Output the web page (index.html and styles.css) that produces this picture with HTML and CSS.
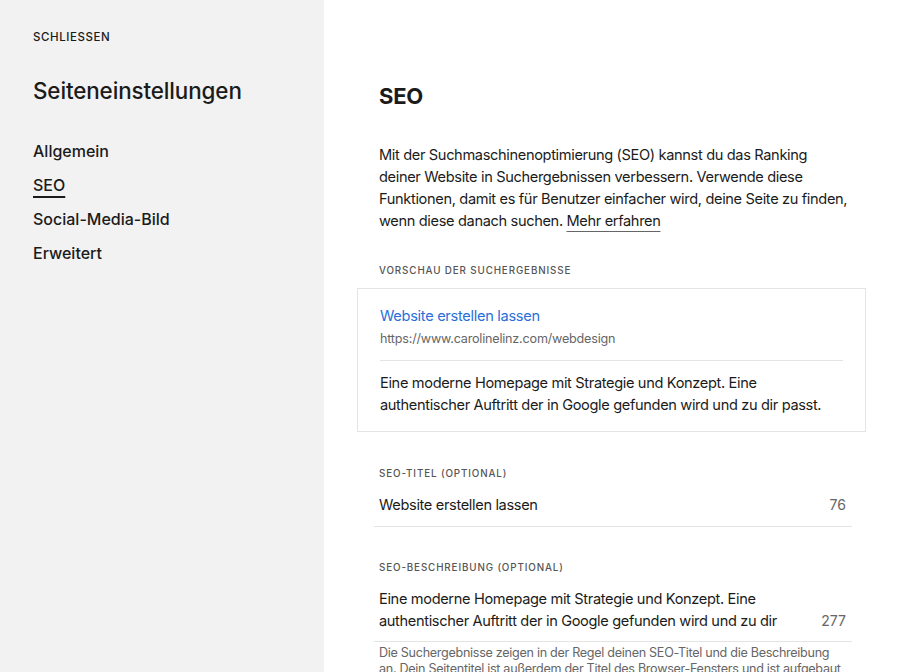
FILE: index.html
```html
<!DOCTYPE html>
<html lang="de">
<head>
<meta charset="utf-8">
<title>Seiteneinstellungen – SEO</title>
<link rel="stylesheet" href="styles.css">
</head>
<body>
<div class="app">
  <aside class="sidebar">
    <div class="close">SCHLIESSEN</div>
    <h2 class="side-title">Seiteneinstellungen</h2>
    <nav class="nav">
      <div class="nav-item">Allgemein</div>
      <div class="nav-item active">SEO</div>
      <div class="nav-item">Social-Media-Bild</div>
      <div class="nav-item">Erweitert</div>
    </nav>
  </aside>
  <main class="main">
    <div class="content">
      <h1 class="title">SEO</h1>
      <p class="intro">Mit der Suchmaschinenoptimierung (SEO) kannst du das Ranking deiner Website in Suchergebnissen verbessern. Verwende diese Funktionen, damit es für Benutzer einfacher wird, deine Seite zu finden, wenn diese danach suchen. <a class="more">Mehr erfahren</a></p>

      <div class="label label-preview">VORSCHAU DER SUCHERGEBNISSE</div>
      <div class="preview">
        <div class="preview-title">Website erstellen lassen</div>
        <div class="preview-url">https://www.carolinelinz.com/webdesign</div>
        <div class="preview-divider"></div>
        <div class="preview-desc">Eine moderne Homepage mit Strategie und Konzept. Eine<br>authentischer Auftritt der in Google gefunden wird und zu dir passt.</div>
      </div>

      <div class="label label-field">SEO-TITEL (OPTIONAL)</div>
      <div class="field">
        <div class="field-text">Website erstellen lassen</div>
        <div class="counter">76</div>
      </div>

      <div class="label label-field2">SEO-BESCHREIBUNG (OPTIONAL)</div>
      <div class="field field-multi">
        <div class="field-text"><span class="line">Eine moderne Homepage mit Strategie und Konzept. Eine</span><span class="line">authentischer Auftritt der in Google gefunden wird und zu dir</span></div>
        <div class="counter">277</div>
      </div>
      <p class="help"><span class="line">Die Suchergebnisse zeigen in der Regel deinen SEO-Titel und die Beschreibung</span><span class="line">an. Dein Seitentitel ist außerdem der Titel des Browser-Fensters und ist aufgebaut</span></p>
    </div>
  </main>
</div>
</body>
</html>
```

FILE: styles.css
```css
* { box-sizing: border-box; }
html, body {
  margin: 0;
  padding: 0;
  height: 100%;
  overflow: hidden;
}
body {
  font-family: Inter, "Noto Sans", "Liberation Sans", sans-serif;
  color: #1b1b1b;
  background: #ffffff;
  -webkit-font-smoothing: antialiased;
}
.app {
  display: flex;
  height: 100vh;
}
.sidebar {
  width: 324px;
  flex: 0 0 324px;
  background: #f2f2f2;
  padding: 29px 0 0 33px;
}
.close {
  font-size: 11.5px;
  line-height: 16px;
  font-weight: 500;
  letter-spacing: 0.05em;
  color: #1b1b1b;
}
.side-title {
  margin: 31px 0 0;
  font-size: 22.4px;
  line-height: 30px;
  font-weight: 500;
  letter-spacing: -0.005em;
}
.nav {
  margin-top: 28px;
  display: flex;
  flex-direction: column;
}
.nav-item {
  font-size: 16px;
  line-height: 34px;
  font-weight: 500;
  color: #1b1b1b;
}
.nav-item.active {
  text-decoration: underline;
  text-decoration-thickness: 2px;
  text-underline-offset: 5px;
}
.main {
  flex: 1;
  padding: 81px 0 0 55px;
}
.content {
  width: 472px;
}
.title {
  margin: 0;
  font-size: 22px;
  line-height: 30px;
  font-weight: 700;
  letter-spacing: -0.01em;
}
.intro {
  margin: 33px 0 0;
  font-size: 14.6px;
  line-height: 22px;
  letter-spacing: -0.35px;
}
.more {
  color: #1b1b1b;
  text-decoration: underline;
  text-decoration-color: #666;
  text-decoration-thickness: 1px;
  text-underline-offset: 5px;
}
.label {
  font-size: 9.8px;
  line-height: 14px;
  font-weight: 500;
  letter-spacing: 0.09em;
  color: #555555;
}
.label-preview { margin-top: 32px; }
.preview {
  margin: 10px -15px 0 -22px;
  border: 1px solid #e4e4e4;
  padding: 16px 22px 15px 22px;
}
.preview-title {
  font-size: 14.6px;
  line-height: 22px;
  color: #2a6fd8;
  letter-spacing: -0.3px;
}
.preview-url {
  margin-top: 2px;
  font-size: 12.6px;
  line-height: 20px;
  color: #666666;
  letter-spacing: -0.2px;
}
.preview-divider {
  margin-top: 11px;
  height: 1px;
  background: #e4e4e4;
}
.preview-desc {
  margin-top: 11px;
  font-size: 14.6px;
  line-height: 22px;
  white-space: nowrap;
  letter-spacing: -0.35px;
}
.label-field { margin-top: 35px; }
.label-field2 { margin-top: 34px; }
.field {
  margin: 13px -1px 0 -5px;
  padding: 0 6px 10px 5px;
  border-bottom: 1px solid #e4e4e4;
  display: flex;
  justify-content: space-between;
  align-items: flex-end;
}
.field-multi {
  padding-bottom: 9px;
}
.field-text {
  font-size: 14.6px;
  line-height: 22px;
  letter-spacing: -0.35px;
}
.line {
  display: block;
  white-space: nowrap;
}
.counter {
  font-size: 14px;
  line-height: 22px;
  color: #666666;
}
.help {
  margin: 3px 0 0;
  font-size: 12.6px;
  line-height: 16px;
  color: #666666;
  letter-spacing: -0.3px;
}
```
